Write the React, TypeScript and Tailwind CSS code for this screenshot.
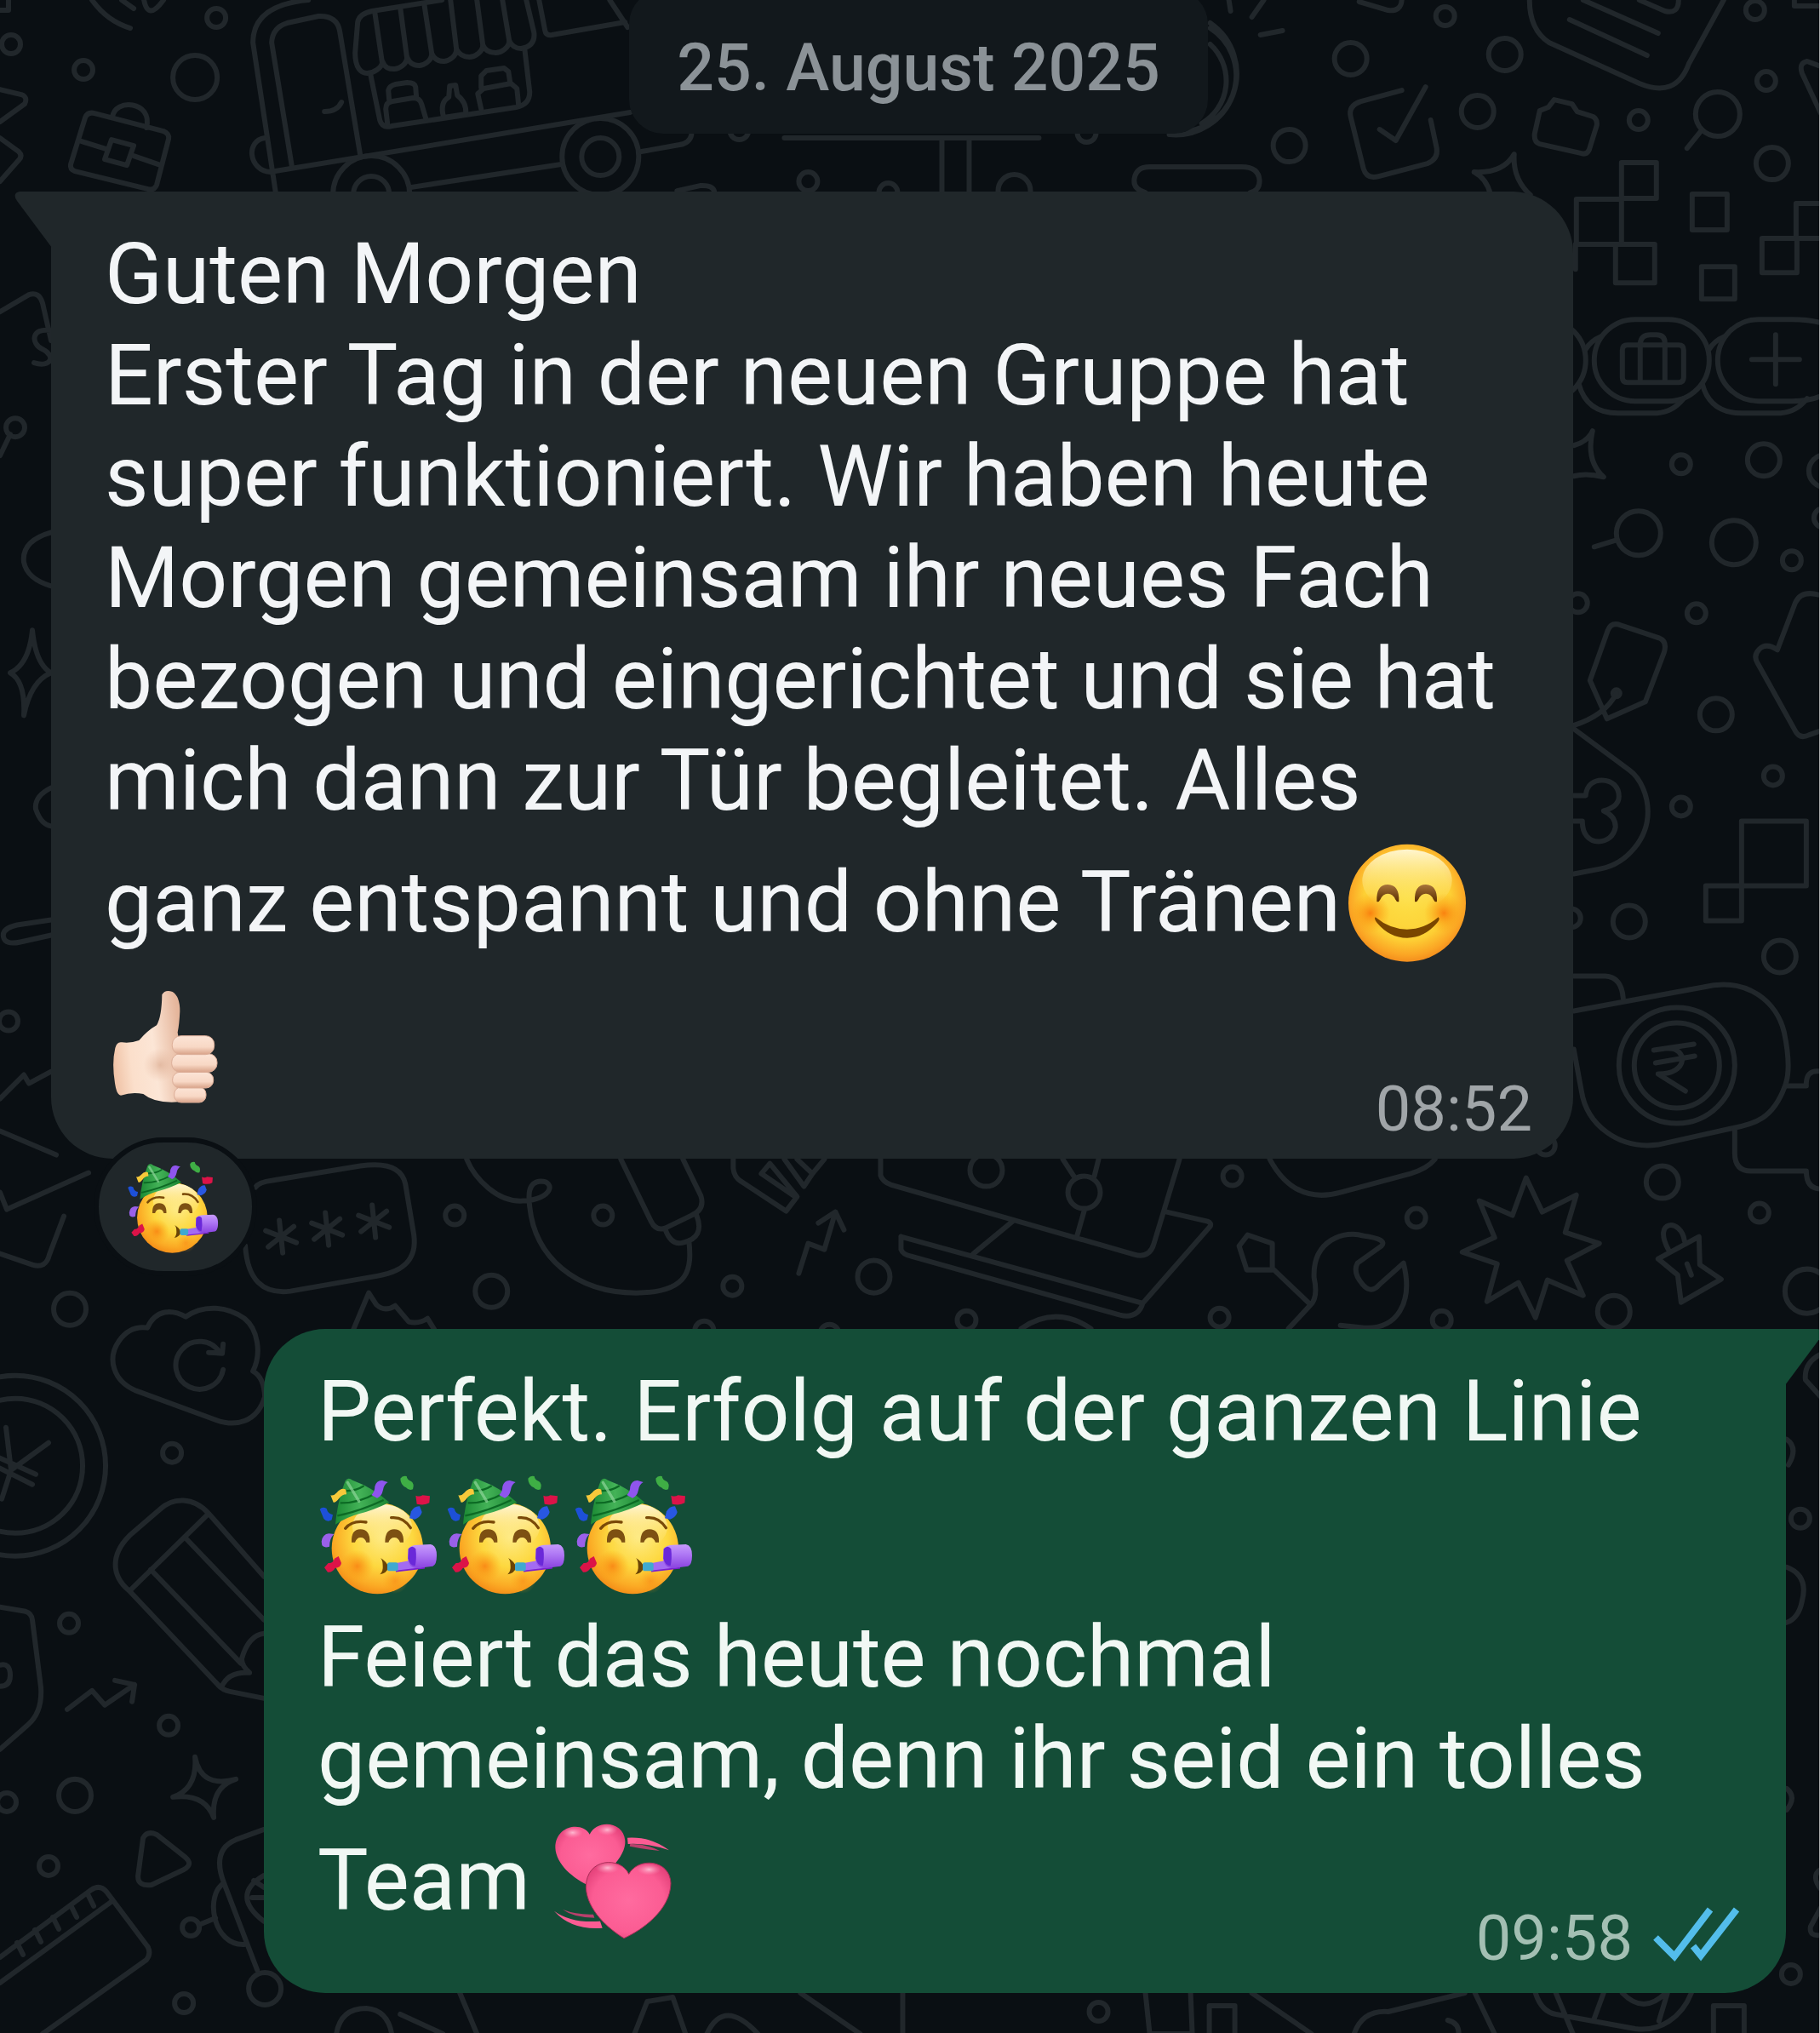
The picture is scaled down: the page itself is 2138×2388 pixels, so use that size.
import type { ReactNode } from 'react';

const smallDots = [
    [254, 21], [13, 52], [98, 82], [868, 153], [949, 213], [1043, 226], [1276, 156],
    [1697, 19], [2061, 12], [2074, 95], [1924, 141], [1974, 545], [2141, 608], [2104, 658],
    [1992, 720], [1853, 708], [2082, 911], [1974, 947], [1845, 1078], [1815, 1345],
    [534, 1427], [708, 1427], [860, 1510], [827, 1562], [974, 1566], [1447, 1381],
    [1663, 1430], [1432, 1547], [1135, 1550], [1693, 1550], [2066, 1424], [202, 1706],
    [81, 1906], [198, 2026], [8, 2116], [57, 2191], [216, 2352], [2103, 2318], [1290, 2362],
    [18, 502], [10, 1199], [2114, 1783],
];

const mediumDots = [
    [1191, 224], [1586, 69], [1767, 64], [1735, 131], [1514, 171], [2081, 192], [2071, 540],
    [2143, 553], [2015, 839], [1913, 1082], [2090, 1123], [1952, 1388], [577, 1516],
    [82, 1537], [1026, 1499], [1158, 1374], [1273, 1400], [1895, 1540], [88, 2108], [311, 2335],
];

const largeDots = [[229, 91], [2017, 134], [1924, 626], [2036, 637], [2122, 1516]];

const asterisks = [[330, 1452], [384, 1443], [439, 1434]];

const doodles = [
    // food truck
    'M362 0Q297 6 297 50L324 228M343 197L319 50Q320 32 337 27L374 19Q396 18 399 37L423 182',
    'M381 131Q396 131 401 120M311 162C288 165 292 200 317 202L740 132M482 220L659 193M753 178L798 170Q810 168 812 158',
    'M519 0L437 13Q422 16 420 26L417 62C417 80 424 86 431 86S449 80 449 72C452 80 457 81 463 81S478 75 478 67C481 75 486 77 492 77S507 71 507 63C510 70 515 72 521 72S536 66 536 58C540 65 545 67 551 67S567 61 567 53C570 60 576 62 582 62S598 56 598 48C601 54 606 57 612 57Q629 54 627 38L618 0',
    'M440 14L449 75M470 9L478 69M498 4L507 63M529 0L536 58M560 0L567 53M590 0L598 48',
    'M435 87L446 141Q449 151 460 148L606 126Q622 123 622 108L616 57M633 0L640 36Q641 42 648 41L734 26M716 0L737 32',
    'M455 145L453 128Q453 120 461 119L485 115Q493 115 495 122L500 139M457 118L456 106Q457 101 464 99L478 97Q487 97 488 102L489 115',
    'M528 101L535 100L537 112Q548 120 547 134L521 138Q516 120 527 114ZM565 128L561 110L568 104L600 98L607 104L609 124M565 103L565 89L571 83L592 80L597 84L599 97',
    // briefcase
    'M111 133L192 154Q199 157 198 163L184 217Q181 224 174 222L88 201Q82 199 83 193L100 138Q103 131 111 133ZM132 138C134 115 180 118 172 150M96 166L125 175M157 183L186 193M131 164L157 171L149 194L123 187Z',
    'M0 105L25 111Q33 114 29 122L0 143M0 162L22 178Q27 183 22 188L0 213M108 0Q126 25 153 33M143 0L157 10M169 0Q174 25 192 0M10 0V12H0',
    'M921 162H1220M1106 163V226M1138 163V226M795 224L822 218Q838 217 839 226M1345 226Q1330 222 1332 210Q1334 196 1350 196H1458Q1478 196 1479 212Q1479 224 1468 226',
    // sun
    'M1421 27A72 72 0 0 1 1373 158M1421 33A66 66 0 0 1 1395 154M1421 52A58 58 0 0 1 1411 145M1443 0L1445 13M1484 0L1470 20M1480 41L1506 36M1596 2L1630 12Q1645 14 1646 0',
    // notepad
    'M1796 0Q1796 35 1819 50L1925 98Q1968 116 1983 75L2024 0M1843 23L1934 65M1859 0L1947 39M1925 0L1955 13Q1971 17 1971 0M2107 0V7H2138M2138 78L2122 72Q2112 74 2116 86L2138 133M1998 153L1981 174',
    // checkbox
    'M1646 106L1598 119Q1583 124 1586 137L1601 198Q1605 211 1619 207L1676 192Q1689 187 1687 174L1680 141M1620 152L1639 165L1674 102',
    'M1825 117L1846 122L1852 131L1868 136Q1876 138 1875 147L1866 176Q1863 182 1857 180L1808 169Q1801 167 1802 157L1808 130L1818 126ZM1731 202Q1765 204 1778 181Q1776 210 1797 229M1731 202Q1746 210 1750 228',
    // square tiles
    'M1851 234H1904V287H1851ZM1904 191H1945V233H1904ZM1897 287H1943V332H1897ZM1987 228H2028V270H1987ZM1998 313H2037V351H1998ZM2069 280H2110V320H2069ZM2145 239H2109V280H2145M1850 287V316',
    // capsules
    'M1775 375H1814A48 48 0 0 1 1814 471H1775M1920 375H1959A48 48 0 0 1 1959 471H1920A48 48 0 0 1 1920 375ZM2138 379Q2125 375 2104 375H2065A48 48 0 0 0 2065 471H2104Q2125 471 2138 465',
    'M1880 395Q1868 400 1862 410M1854 451Q1863 485 1900 485H1946Q1964 484 1977 468M2025 395Q2013 400 2007 410M1999 451Q2008 485 2045 485H2091Q2109 484 2122 468',
    'M1911 405H1971Q1977 405 1977 411V443Q1977 449 1971 449H1911Q1905 449 1905 443V411Q1905 405 1911 405ZM1926 449V403Q1927 393 1938 393H1945Q1955 393 1955 403V449M2085 393V451M2057 422H2113',
    'M1848 523Q1864 519 1870 506Q1862 541 1883 560Q1863 555 1848 559M1898 634L1872 642',
    // price tag
    'M1888 740Q1892 730 1903 734L1948 749Q1958 753 1954 766L1932 824L1887 844L1867 799ZM1898 814Q1885 840 1847 852',
    'M2138 699Q2115 692 2108 708L2087 763Q2074 754 2066 762Q2058 770 2064 779L2108 858Q2113 868 2124 863L2138 858',
    'M1847 855L1913 904C1927 914 1935 935 1935 953C1935 985 1910 1014 1880 1020L1848 1026M1848 934H1862C1863 921 1872 916 1881 916C1893 916 1901 924 1901 935Q1901 947 1883 952Q1897 958 1897 971C1895 982 1887 988 1877 988C1866 988 1858 980 1858 964H1848',
    'M2045 964H2121V1040H2045ZM2003 1040H2045V1081H2003Z',
    // wallet with coin
    'M1848 1146H1885Q1904 1147 1906 1172M1848 1187L2000 1159C2053 1146 2087 1178 2095 1212Q2104 1255 2096 1275C2082 1314 2060 1320 2033 1325L1947 1344C1900 1350 1863 1320 1857 1281L1848 1232',
    'M2097 1275H2121Q2120 1255 2138 1258M2037 1325V1354Q2037 1375 2056 1375H2121Q2121 1396 2138 1396',
    'M1942 1233L1989 1226M1944 1248L1990 1240M1959 1231C1981 1230 1984 1261 1947 1261L1979 1281',
    // left strip
    'M0 366L34 346Q46 342 50 356L60 400M60 388C36 384 36 404 50 410C66 418 60 432 40 426M12 510L0 535M60 625Q25 635 28 660Q32 680 60 688M12 790Q34 780 38 740Q42 780 60 790Q36 800 28 840Q30 800 12 790ZM60 925Q40 935 42 950Q48 968 60 970M60 1080L20 1086Q2 1090 4 1100Q6 1110 24 1106L60 1098M0 1290L28 1262L34 1272L60 1258',
    'M0 1328L66 1356M0 1400L8 1420L104 1377M75 1428L58 1473Q54 1490 38 1485L0 1472',
    // password field
    'M300 1394Q304 1388 320 1386L423 1369Q470 1362 476 1390L486 1450C490 1480 472 1493 444 1498L341 1516Q292 1522 288 1463',
    'M548 1361C558 1385 585 1412 614 1410C650 1408 652 1387 635 1387C618 1388 621 1407 622 1417C628 1475 675 1518 747 1518C812 1518 812 1487 809 1457',
    'M729 1361L764 1433Q770 1446 781 1442L812 1427Q828 1420 823 1404L802 1361M781 1443Q788 1463 802 1459Q828 1453 818 1427',
    'M861 1361V1372Q862 1382 870 1387L923 1422L936 1405L904 1366L894 1378L932 1404M921 1361L944 1393L954 1378L936 1361M954 1378L968 1361M938 1495L949 1460L968 1467L981 1423M961 1436L981 1423L991 1444',
    'M415 1561L433 1518L442 1532Q452 1541 464 1533L480 1552Q492 1555 502 1548L510 1561',
    // laptop
    'M1034 1361V1380Q1036 1387 1046 1391L1332 1473Q1350 1478 1355 1460L1385 1361M1058 1452L1341 1530M1058 1452V1467Q1060 1473 1070 1475L1315 1544Q1336 1549 1342 1530L1421 1440Q1423 1436 1418 1434L1370 1423M1189 1434L1143 1472M1248 1361L1261 1381M1290 1361L1285 1381M1273 1422L1265 1450',
    'M1199 1560Q1240 1532 1281 1560M1491 1361Q1520 1415 1574 1400L1656 1378Q1676 1372 1685 1361',
    // starburst
    'M1792 1383L1811 1423L1851 1403L1838 1447L1878 1460L1840 1480L1859 1521L1817 1503L1803 1547L1783 1506L1746 1528L1758 1484L1717 1470L1755 1453L1737 1410L1776 1427Z',
    // padlock
    'M1959 1467C1940 1432 1974 1430 1978 1457M1995 1452L1996 1485L2021 1502L1974 1529L1970 1497L1947 1478ZM1981 1484L1986 1497',
    // screwdriver and wrench
    'M1513 1560L1539 1532L1496 1491M1465 1450L1494 1460V1491H1464L1455 1463ZM1539 1532Q1548 1523 1543 1500C1541 1455 1580 1444 1601 1451Q1630 1455 1622 1463L1594 1483Q1588 1494 1600 1508Q1610 1520 1620 1508L1648 1483C1660 1530 1640 1561 1602 1559L1574 1556',
    // cloud
    'M173 1559C183 1537 202 1537 218 1546C240 1531 267 1534 287 1548C302 1560 308 1588 297 1610Q310 1617 311 1640C302 1670 277 1676 253 1667L160 1633C133 1622 125 1595 140 1574Q153 1556 173 1559ZM262 1608A28 28 0 1 1 258 1588M245 1588L261 1589L262 1578',
    'M7 1676L13 1726L57 1694M13 1726L2 1760M0 1712L42 1731M0 1724L38 1743',
    // pencil
    'M310 1851L245 1777C227 1757 203 1758 188 1772L152 1803C130 1825 130 1850 152 1868L255 1977Q260 1984 270 1986L310 1994M245 1777L152 1868M218 1806L310 1902M177 1843L283 1953M260 1981Q268 1962 293 1964Q283 1955 284 1947Q292 1920 310 1918',
    'M0 1887L30 1892Q37 1894 38 1902L48 1981Q50 2010 33 2025L0 2054M0 1955Q12 1952 12 1967Q12 1980 0 1980M79 2007L108 1985L123 2002L158 1978M135 1973L158 1978L155 1998',
    'M229 2063Q236 2100 277 2089Q248 2098 251 2134Q240 2105 203 2110Q232 2100 229 2063ZM168 2158Q173 2149 184 2154L218 2181Q227 2189 216 2195L178 2213Q162 2215 162 2203Z',
    // ruler
    'M0 2298L107 2219Q117 2212 125 2221L173 2285Q178 2293 172 2301L50 2388M0 2328L132 2232M103 2224L110 2238M83 2237L90 2251M62 2251L69 2265M41 2266L48 2280M20 2281L27 2295',
    'M310 2148L277 2160Q248 2172 263 2211L302 2313M263 2211C240 2225 250 2285 287 2283M236 2259L253 2252M310 2202Q270 2225 310 2256M298 2208L310 2216M296 2228H310',
    // bottom strip
    'M395 2388Q400 2358 430 2358Q455 2360 460 2388M470 2365L520 2388M540 2340L560 2388M745 2388L760 2350L790 2345L805 2388M830 2388Q850 2345 890 2388M940 2340L1010 2388M1060 2340V2388M1345 2340L1350 2388H1400L1398 2340M1420 2388V2355H1450V2388M1470 2340L1540 2388M1590 2388Q1600 2360 1630 2362L1720 2340',
    'M1732 2340L1755 2388M1700 2372Q1713 2375 1713 2388M1803 2340Q1810 2362 1827 2365L1920 2382C1950 2386 1975 2368 1986 2340M1827 2340L1847 2388M1883 2340L1872 2370M1905 2340Q1930 2366 1956 2340M1958 2340L1948 2373M2012 2390V2355H2048V2390',
    // right strip
    'M2138 1590Q2118 1600 2120 1620L2138 1640M2098 1690Q2112 1700 2100 1720M2098 1840Q2124 1850 2116 1880Q2112 1900 2098 1905M2098 2100Q2110 2110 2098 2125M2138 2240L2126 2262Q2124 2274 2138 2272M2138 2195Q2126 2202 2138 2218',
];

function Wallpaper() {
    return (
        <svg
            aria-hidden="true"
            className="absolute inset-0 h-full w-full"
            viewBox="0 0 2138 2388"
            preserveAspectRatio="xMinYMin slice"
            fill="none"
            stroke="#21272b"
            strokeWidth="6"
            strokeLinecap="round"
            strokeLinejoin="round"
        >
            {smallDots.map(([x, y]) => (
                <circle key={`${x}-${y}`} cx={x} cy={y} r="11" />
            ))}
            {mediumDots.map(([x, y]) => (
                <circle key={`${x}-${y}`} cx={x} cy={y} r="19" />
            ))}
            {largeDots.map(([x, y]) => (
                <circle key={`${x}-${y}`} cx={x} cy={y} r="26" />
            ))}
            {asterisks.map(([x, y]) => (
                <path key={x} d={`M${x - 2} ${y - 19}L${x + 2} ${y + 19}M${x - 18} ${y - 7}L${x + 18} ${y + 7}M${x - 15} ${y + 12}L${x + 15} ${y - 12}`} />
            ))}
            <circle cx="436" cy="228" r="45" />
            <circle cx="436" cy="228" r="21" />
            <circle cx="705" cy="184" r="45" />
            <circle cx="705" cy="184" r="22" />
            <circle cx="1969" cy="1251" r="68" />
            <circle cx="1969" cy="1251" r="50" />
            <circle cx="18" cy="1721" r="106" />
            <circle cx="18" cy="1721" r="79" />
            <circle cx="224" cy="2263" r="10" />
            <circle cx="1898" cy="814" r="4" fill="#21272b" />
            {doodles.map((d) => (
                <path key={d} d={d} />
            ))}
        </svg>
    );
}

const emojiClass = 'inline-block h-[170px] w-[150px] align-[-52px]';

function SmilingFace() {
    return (
        <svg role="img" aria-label="😊" viewBox="78 15 450 510" className={emojiClass}>
            <defs>
                <radialGradient id="smile-skin" cx="0.5" cy="0.45" r="0.56">
                    <stop offset="0" stopColor="#fde047" />
                    <stop offset="0.65" stopColor="#fdd035" />
                    <stop offset="0.88" stopColor="#fba524" />
                    <stop offset="1" stopColor="#f28a1c" />
                </radialGradient>
                <linearGradient id="smile-shine" x2="0" y2="1">
                    <stop offset="0" stopColor="#fff6d0" />
                    <stop offset="1" stopColor="#fde25a" stopOpacity="0" />
                </linearGradient>
                <radialGradient id="smile-cheek">
                    <stop offset="0" stopColor="#f97a0c" stopOpacity="0.9" />
                    <stop offset="1" stopColor="#fba010" stopOpacity="0" />
                </radialGradient>
                <linearGradient id="smile-eye" x2="0" y2="1">
                    <stop offset="0" stopColor="#a8743a" />
                    <stop offset="1" stopColor="#5a2e00" />
                </linearGradient>
            </defs>
            <circle cx="312" cy="269" r="207" fill="url(#smile-skin)" />
            <ellipse cx="312" cy="190" rx="158" ry="110" fill="url(#smile-shine)" />
            <circle cx="182" cy="305" r="70" fill="url(#smile-cheek)" />
            <circle cx="442" cy="305" r="70" fill="url(#smile-cheek)" />
            <path d="M205 264Q202 204 244 204Q286 206 283 264Q276 268 270 256Q262 236 244 236Q226 237 218 256Q212 268 205 264Z" fill="url(#smile-eye)" />
            <path d="M339 264Q336 204 378 204Q420 206 417 264Q410 268 404 256Q396 236 378 236Q360 237 352 256Q346 268 339 264Z" fill="url(#smile-eye)" />
            <path d="M200 319Q252 362 312 362Q372 362 422 319Q430 326 417 340Q372 392 312 392Q250 392 206 339Q194 324 200 319Z" fill="#7a4600" />
        </svg>
    );
}

function ThumbsUp() {
    return (
        <svg role="img" aria-label="👍🏻" viewBox="39 15 450 510" className={emojiClass}>
            <defs>
                <linearGradient id="thumb-skin" x1="0" x2="1" y1="0.6" y2="0.4">
                    <stop offset="0" stopColor="#f0c4a8" />
                    <stop offset="0.25" stopColor="#fbdfcb" />
                    <stop offset="0.6" stopColor="#fce6d6" />
                    <stop offset="1" stopColor="#e5b69c" />
                </linearGradient>
                <linearGradient id="thumb-finger" x2="0" y2="1">
                    <stop offset="0" stopColor="#fce4d6" />
                    <stop offset="0.6" stopColor="#f8d8c5" />
                    <stop offset="1" stopColor="#d8a288" />
                </linearGradient>
                <radialGradient id="thumb-shade">
                    <stop offset="0" stopColor="#d9a88c" stopOpacity="0.65" />
                    <stop offset="1" stopColor="#e5b69c" stopOpacity="0" />
                </radialGradient>
            </defs>
            <path d="M241 82Q252 62 278 72Q304 88 304 140Q302 185 296 215L300 240L300 460Q215 466 175 432Q135 424 96 437Q84 436 78 410Q62 330 76 270Q82 246 100 250Q130 254 160 243Q190 208 222 190Q240 160 241 82Z" fill="url(#thumb-skin)" />
            <circle cx="235" cy="330" r="60" fill="url(#thumb-shade)" />
            <rect x="284" y="408" width="112" height="54" rx="24" fill="url(#thumb-finger)" stroke="#dcae98" strokeWidth="3" />
            <rect x="278" y="355" width="144" height="56" rx="26" fill="url(#thumb-finger)" stroke="#dcae98" strokeWidth="3" />
            <rect x="275" y="290" width="160" height="65" rx="30" fill="url(#thumb-finger)" stroke="#dcae98" strokeWidth="3" />
            <rect x="277" y="227" width="148" height="66" rx="30" fill="url(#thumb-finger)" stroke="#dcae98" strokeWidth="3" />
        </svg>
    );
}

function PartyFace({ className = emojiClass }: { className?: string }) {
    return (
        <svg role="img" aria-label="🥳" viewBox="42 45 450 510" className={className}>
            <defs>
                <radialGradient id="party-skin" cx="0.56" cy="0.38" r="0.65">
                    <stop offset="0" stopColor="#feeb85" />
                    <stop offset="0.5" stopColor="#fdd83f" />
                    <stop offset="0.82" stopColor="#fbab25" />
                    <stop offset="1" stopColor="#f48a16" />
                </radialGradient>
                <linearGradient id="party-shine" x2="0" y2="1">
                    <stop offset="0" stopColor="#fff5d5" />
                    <stop offset="1" stopColor="#fee36a" stopOpacity="0" />
                </linearGradient>
                <radialGradient id="party-cheek">
                    <stop offset="0" stopColor="#f98212" stopOpacity="0.85" />
                    <stop offset="1" stopColor="#fba010" stopOpacity="0" />
                </radialGradient>
                <linearGradient id="party-horn" x2="0" y2="1">
                    <stop offset="0" stopColor="#c79afc" />
                    <stop offset="0.4" stopColor="#b07af5" />
                    <stop offset="1" stopColor="#8a42e0" />
                </linearGradient>
                <linearGradient id="party-hat" x2="1" y2="0">
                    <stop offset="0" stopColor="#1c8a34" />
                    <stop offset="0.45" stopColor="#43b257" />
                    <stop offset="1" stopColor="#1a8432" />
                </linearGradient>
            </defs>
            <circle cx="253" cy="350" r="161" fill="url(#party-skin)" />
            <ellipse cx="270" cy="275" rx="105" ry="80" fill="url(#party-shine)" />
            <circle cx="182" cy="413" r="58" fill="url(#party-cheek)" />
            <circle cx="315" cy="465" r="45" fill="url(#party-cheek)" opacity="0.6" />
            <path d="M140 112Q150 98 165 110Q235 135 295 188Q240 215 190 228Q145 240 105 266Q112 185 140 112Z" fill="url(#party-hat)" />
            <path d="M132 146Q170 152 206 130M122 190Q185 192 248 156M112 235Q190 220 275 180" fill="none" stroke="#0c6a24" strokeWidth="7" />
            <path d="M148 118L188 184" stroke="#8fd69a" strokeWidth="10" strokeLinecap="round" opacity="0.7" />
            <path d="M140 280Q165 250 213 258M302 242Q345 238 370 278" fill="none" stroke="#7a4a08" strokeWidth="10" strokeLinecap="round" />
            <path d="M162 329Q160 283 193 283Q228 284 226 329L214 329Q209 312 194 312Q180 312 174 329Z" fill="#7d5012" />
            <path d="M280 329Q280 283 312 283Q347 284 345 329L333 329Q327 312 313 312Q298 312 292 329Z" fill="#7d5012" />
            <path d="M264 384Q272 392 272 412Q274 430 262 442Q286 438 292 418Q288 398 264 384Z" fill="#6b4405" />
            <path d="M320 402L365 394L420 420L325 430Z" fill="#a36bf2" />
            <path d="M318 431L420 419" stroke="#7a1fd0" strokeWidth="5" />
            <rect x="288" y="400" width="38" height="30" rx="8" fill="#3fa9d0" />
            <path d="M362 352Q370 338 395 338L440 336Q462 340 462 375Q462 408 448 413L395 420Q362 420 360 385Z" fill="url(#party-horn)" />
            <path d="M362 352Q376 336 388 352Q392 385 386 412Q366 412 361 385Z" fill="#6a28d9" />
            <path d="M88 163Q100 166 110 154Q126 134 142 143L144 160Q128 160 118 174Q106 190 98 188Z" fill="#f7c93a" />
            <path d="M232 162Q244 150 244 132Q250 110 270 111L290 117Q276 124 273 144Q268 168 252 173Z" fill="#8f55ee" />
            <path d="M334 104Q342 92 356 96Q358 110 372 114Q384 122 378 142Q364 148 354 136Q334 126 334 104Z" fill="#3fae45" />
            <path d="M388 164Q402 170 412 163L438 166L436 190Q420 200 392 194Z" fill="#dc1348" />
            <path d="M50 212Q60 202 74 210Q78 228 96 232L92 250Q76 260 64 246Z" fill="#1d50d8" />
            <path d="M372 220Q384 200 402 202L410 222Q406 240 384 248L366 244Z" fill="#2857e2" />
            <path d="M56 326Q60 300 82 298L100 300Q84 316 84 344Q66 350 58 340Z" fill="#9a60ea" />
            <path d="M66 418L80 402Q96 404 102 386L116 378L126 402Q124 418 104 420Q94 436 78 434Z" fill="#dc1348" />
        </svg>
    );
}

function RevolvingHearts() {
    return (
        <svg role="img" aria-label="💞" viewBox="81 69 450 510" className={emojiClass}>
            <defs>
                <radialGradient id="heart-pink" cx="0.5" cy="0.5" r="0.6">
                    <stop offset="0" stopColor="#ff6b9f" />
                    <stop offset="0.7" stopColor="#fb5c93" />
                    <stop offset="1" stopColor="#e23f78" />
                </radialGradient>
                <radialGradient id="heart-shine">
                    <stop offset="0" stopColor="#ffc4d8" stopOpacity="0.9" />
                    <stop offset="1" stopColor="#ff8fb5" stopOpacity="0" />
                </radialGradient>
            </defs>
            <path d="M215 158C190 112 94 125 94 205C96 265 160 315 214 340C260 310 345 240 340 180C334 110 240 105 215 158Z" fill="url(#heart-pink)" />
            <ellipse cx="155" cy="152" rx="36" ry="20" fill="url(#heart-shine)" />
            <ellipse cx="277" cy="142" rx="36" ry="20" fill="url(#heart-shine)" />
            <path d="M353 298C326 236 202 238 202 345C206 425 280 490 336 524C400 495 500 425 501 330C498 245 385 238 353 298Z" fill="url(#heart-pink)" stroke="#a82f58" strokeWidth="3" />
            <ellipse cx="278" cy="276" rx="42" ry="20" fill="url(#heart-shine)" />
            <ellipse cx="424" cy="282" rx="42" ry="20" fill="url(#heart-shine)" />
            <path d="M348 170Q430 165 495 214Q420 188 350 192Z" fill="#fb5c93" />
            <path d="M358 192Q410 190 462 216Q405 210 356 200Z" fill="#b8406c" />
            <path d="M90 428Q150 472 252 464L260 488Q150 496 90 428Z" fill="#fb5c93" />
            <path d="M120 423Q170 442 228 440L232 452Q160 452 120 423Z" fill="#b8406c" />
        </svg>
    );
}

function ReadTicks() {
    return (
        <svg role="img" aria-label="Gelesen" viewBox="0 0 102 66" className="-mt-3 h-[66px] w-[102px]" fill="none" stroke="#53bdeb" strokeWidth="8">
            <path d="M3 38L25 60L67 5M47 48L56 59L98 5" />
        </svg>
    );
}

type MessageProps = {
    time: string;
    outgoing?: boolean;
    children: ReactNode;
};

function Message({ time, outgoing = false, children }: MessageProps) {
    return (
        <article
            className={`relative flow-root w-full max-w-[1788px] rounded-[72px] pl-[63px] text-[100px] leading-[119px] ${
                outgoing
                    ? 'self-end rounded-tr-none bg-[#144d37] pb-5 pr-[54px] pt-[37px] text-[#f1f8f4]'
                    : 'rounded-tl-none bg-[#20272a] pb-[14px] pr-12 pt-[37px] text-[#f3f5f7]'
            }`}
        >
            <svg
                aria-hidden="true"
                viewBox="0 0 44 66"
                className={`absolute top-0 h-[66px] w-[44px] ${outgoing ? 'left-full -ml-px -scale-x-100' : 'right-full -mr-px'}`}
                fill={outgoing ? '#144d37' : '#20272a'}
            >
                <path d="M44 0H6Q-3 2 3 11L44 66Z" />
            </svg>
            {children}
            <div
                className={`float-right flex items-center gap-6 text-[74px] leading-[88px] ${
                    outgoing ? 'mt-[108px] text-[#a3bfb3]' : 'mt-[113px] text-[#a0a5a8]'
                }`}
            >
                <time>{time}</time>
                {outgoing && <ReadTicks />}
            </div>
        </article>
    );
}

export default function App() {
    return (
        <main className="relative min-h-screen overflow-hidden border-r border-[#b0b0b0] bg-[#0a0f13] font-['Roboto',sans-serif]">
            <Wallpaper />
            <div className="relative flex flex-col pb-12 pl-[60px] pr-[39px]">
                <h2 className="-mt-3 self-center rounded-[40px] bg-[#12181c] px-[56px] pb-[33px] pt-[48px] text-[77px] font-medium leading-[88px] text-[#8b9297]">
                    25. August 2025
                </h2>

                <div className="mt-[68px]">
                    <Message time="08:52">
                        Guten Morgen
                        <br />
                        Erster Tag in der neuen Gruppe hat super funktioniert. Wir haben heute Morgen gemeinsam ihr
                        neues Fach bezogen und eingerichtet und sie hat mich dann zur Tür begleitet. Alles ganz
                        entspannt und ohne Tränen
                        <SmilingFace />
                        <ThumbsUp />
                    </Message>
                    <button
                        type="button"
                        className="relative -mt-[25px] ml-[50px] flex h-[163px] w-[192px] items-center justify-center rounded-full border-[6px] border-[#0a0f13] bg-[#20272a]"
                    >
                        <PartyFace className="h-[131px] w-[116px]" />
                    </button>
                </div>

                <div className="mt-[62px] flex flex-col">
                    <Message time="09:58" outgoing>
                        Perfekt. Erfolg auf der ganzen Linie <PartyFace />
                        <PartyFace />
                        <PartyFace />
                        <br />
                        Feiert das heute nochmal gemeinsam, denn ihr seid ein tolles Team <RevolvingHearts />
                    </Message>
                </div>
            </div>
        </main>
    );
}
